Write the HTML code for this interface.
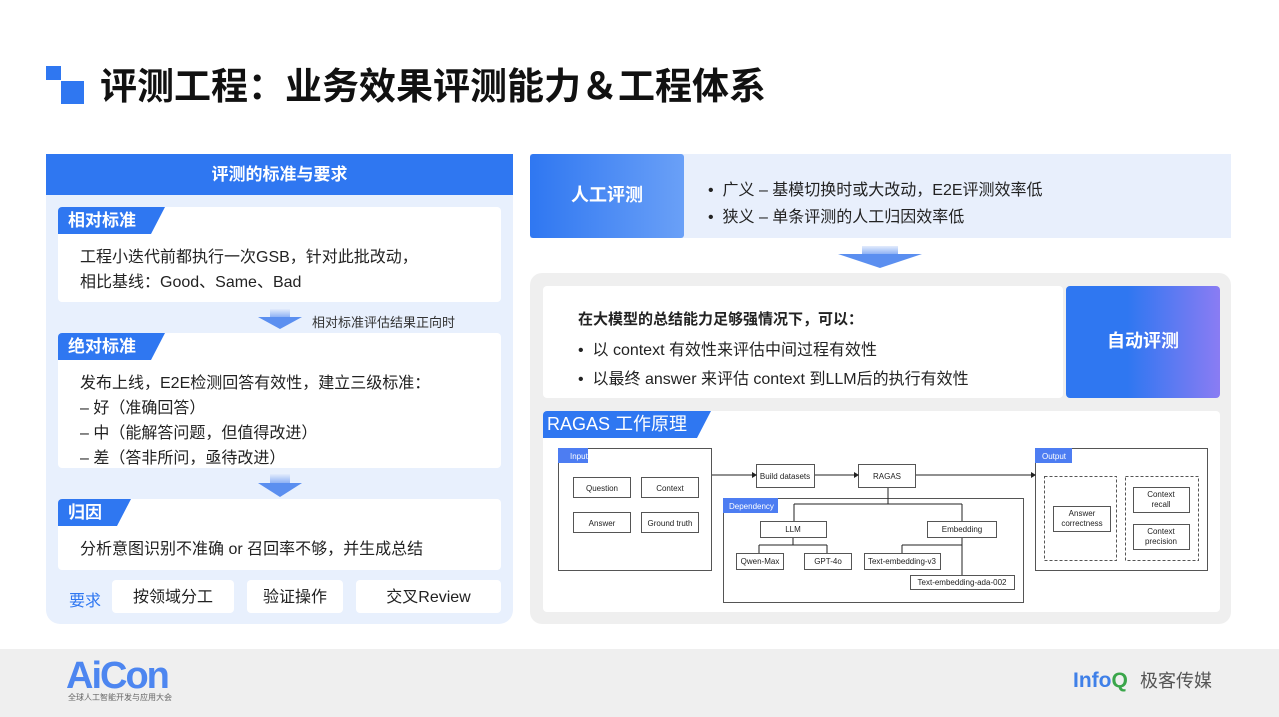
<!DOCTYPE html>
<html><head><meta charset="utf-8"><style>
*{margin:0;padding:0;box-sizing:border-box}
body{width:1279px;height:717px;position:relative;background:#fff;font-family:"Liberation Sans","Noto Sans CJK SC",sans-serif;color:#222;overflow:hidden}
.a{position:absolute}
.card{position:absolute;background:#fff;border-radius:4px}
.tag{position:absolute;left:0;top:0;height:27px;background:#2f77f1;color:#fff;font-weight:bold;font-size:17px;line-height:27px;padding-left:10px;clip-path:polygon(0 0,100% 0,calc(100% - 14px) 100%,0 100%);border-radius:4px 0 12px 0}
.t{position:absolute;font-size:16px;white-space:nowrap;color:#222}
.btn{position:absolute;top:580px;height:33px;background:#fff;border-radius:4px;font-size:16px;line-height:35px;text-align:center}
.arrow{position:absolute;width:0;height:0;border-left:22px solid transparent;border-right:22px solid transparent;border-top:12px solid #5b8ff0}
.arrowstem{position:absolute;background:linear-gradient(#e3ecfc,#8fb2f5)}
</style></head><body>
<div class="a" style="left:46px;top:66px;width:15px;height:14px;background:#2f77f1"></div>
<div class="a" style="left:61px;top:81px;width:23px;height:23px;background:#2f77f1"></div>
<div class="a" style="left:100px;top:64px;font-size:37px;font-weight:bold;color:#111;white-space:nowrap;line-height:46px">评测工程：业务效果评测能力＆工程体系</div>

<div class="a" style="left:46px;top:154px;width:467px;height:470px;background:#e8f0fd;border-radius:2px 2px 14px 14px"></div>
<div class="a" style="left:46px;top:154px;width:467px;height:41px;background:#2f77f1;color:#fff;font-weight:bold;font-size:17px;line-height:41px;text-align:center">评测的标准与要求</div>

<div class="card" style="left:58px;top:207px;width:443px;height:95px"><div class="tag" style="width:107px">相对标准</div></div>
<div class="t" style="left:80px;top:243px">工程小迭代前都执行一次GSB，针对此批改动，</div>
<div class="t" style="left:80px;top:268px">相比基线：Good、Same、Bad</div>
<div class="arrowstem" style="left:270px;top:309px;width:20px;height:8px"></div>
<div class="arrow" style="left:258px;top:317px"></div>
<div class="a" style="left:312px;top:312px;font-size:13px;color:#333">相对标准评估结果正向时</div>

<div class="card" style="left:58px;top:333px;width:443px;height:135px"><div class="tag" style="width:107px">绝对标准</div></div>
<div class="t" style="left:80px;top:369px">发布上线，E2E检测回答有效性，建立三级标准：</div>
<div class="t" style="left:80px;top:394px">– 好（准确回答）</div>
<div class="t" style="left:80px;top:419px">– 中（能解答问题，但值得改进）</div>
<div class="t" style="left:80px;top:444px">– 差（答非所问，亟待改进）</div>
<div class="arrowstem" style="left:270px;top:474px;width:20px;height:9px"></div>
<div class="arrow" style="left:258px;top:483px;border-top-width:14px"></div>

<div class="card" style="left:58px;top:499px;width:443px;height:71px"><div class="tag" style="width:73px">归因</div></div>
<div class="t" style="left:80px;top:535px">分析意图识别不准确 or 召回率不够，并生成总结</div>

<div class="a" style="left:69px;top:587px;font-size:16px;color:#2f77f1">要求</div>
<div class="btn" style="left:112px;width:122px">按领域分工</div>
<div class="btn" style="left:247px;width:96px">验证操作</div>
<div class="btn" style="left:356px;width:145px">交叉Review</div>

<div class="a" style="left:530px;top:154px;width:701px;height:84px;background:#e8effc"></div>
<div class="a" style="left:530px;top:154px;width:154px;height:84px;background:linear-gradient(90deg,#2f77f1,#6aa0f7);border-radius:3px;color:#fff;font-weight:bold;font-size:18px;line-height:82px;text-align:center">人工评测</div>
<div class="t" style="left:708px;top:176px">•&nbsp; 广义 – 基模切换时或大改动，E2E评测效率低</div>
<div class="t" style="left:708px;top:203px">•&nbsp; 狭义 – 单条评测的人工归因效率低</div>
<div class="arrowstem" style="left:862px;top:246px;width:36px;height:8px"></div>
<div class="arrow" style="left:838px;top:254px;border-left-width:42px;border-right-width:42px;border-top-width:14px"></div>

<div class="a" style="left:530px;top:273px;width:701px;height:351px;background:#efefef;border-radius:12px"></div>
<div class="card" style="left:543px;top:286px;width:520px;height:112px"></div>
<div class="a" style="left:1066px;top:286px;width:154px;height:112px;background:linear-gradient(90deg,#2f77f1 40%,#8a7cf3);border-radius:4px;color:#fff;font-weight:bold;font-size:18px;line-height:110px;text-align:center">自动评测</div>
<div class="t" style="left:578px;top:308px;font-weight:bold;font-size:15px">在大模型的总结能力足够强情况下，可以：</div>
<div class="t" style="left:578px;top:336px">•&nbsp; 以 context 有效性来评估中间过程有效性</div>
<div class="t" style="left:578px;top:365px">•&nbsp; 以最终 answer 来评估 context 到LLM后的执行有效性</div>

<div class="card" style="left:543px;top:411px;width:677px;height:201px"><div class="tag" style="width:168px;font-weight:normal;font-size:18px;padding-left:4px">RAGAS 工作原理</div></div>

<svg class="a" style="left:0;top:0" width="1279" height="717" font-family="Liberation Sans,sans-serif" font-size="8" text-anchor="middle">
<g fill="#fff" stroke="#555" stroke-width="1">
<rect x="558.5" y="448.5" width="153" height="122"/>
<rect x="723.5" y="498.5" width="300" height="104"/>
<rect x="1035.5" y="448.5" width="172" height="122"/>
<rect x="573.5" y="477.5" width="57" height="20"/><rect x="641.5" y="477.5" width="57" height="20"/>
<rect x="573.5" y="512.5" width="57" height="20"/><rect x="641.5" y="512.5" width="57" height="20"/>
<rect x="756.5" y="464.5" width="58" height="23"/><rect x="858.5" y="464.5" width="57" height="23"/>
<rect x="760.5" y="521.5" width="66" height="16"/><rect x="927.5" y="521.5" width="69" height="16"/>
<rect x="736.5" y="553.5" width="47" height="16"/><rect x="804.5" y="553.5" width="47" height="16"/>
<rect x="864.5" y="553.5" width="76" height="16"/><rect x="910.5" y="575.5" width="104" height="14"/>
<rect x="1044.5" y="476.5" width="72" height="84" stroke-dasharray="3,2"/>
<rect x="1125.5" y="476.5" width="73" height="84" stroke-dasharray="3,2"/>
<rect x="1053.5" y="506.5" width="57" height="25"/>
<rect x="1133.5" y="487.5" width="56" height="25"/><rect x="1133.5" y="524.5" width="56" height="25"/>
</g>
<g fill="#4d7df2"><rect x="558" y="448" width="30" height="15"/><rect x="723" y="498" width="55" height="15"/><rect x="1035" y="448" width="37" height="15"/></g>
<g stroke="#222" fill="none"><path d="M712 475H752M815 475H854M916 475H1031M888 488V504M794 504H962M794 504V521M962 504V521M793 538V545M759 545H827M759 545V553M827 545V553M962 538V575M902 545H962M902 545V553"/></g>
<g fill="#222"><path d="M752 472l5 3-5 3zM854 472l5 3-5 3zM1031 472l5 3-5 3z"/></g>
<g fill="#fff" text-anchor="start"><text x="570" y="459">Input</text><text x="729" y="509">Dependency</text><text x="1042" y="459">Output</text></g>
<g fill="#222">
<text x="602" y="491">Question</text><text x="670" y="491">Context</text>
<text x="602" y="526">Answer</text><text x="670" y="526">Ground truth</text>
<text x="785" y="479">Build datasets</text><text x="887" y="479">RAGAS</text>
<text x="793" y="532">LLM</text><text x="962" y="532">Embedding</text>
<text x="760" y="564">Qwen-Max</text><text x="828" y="564">GPT-4o</text>
<text x="902" y="564">Text-embedding-v3</text><text x="962" y="585">Text-embedding-ada-002</text>
<text x="1082" y="516">Answer</text><text x="1082" y="526">correctness</text>
<text x="1161" y="497">Context</text><text x="1161" y="507">recall</text>
<text x="1161" y="534">Context</text><text x="1161" y="544">precision</text>
</g>
</svg>

<div class="a" style="left:0;top:649px;width:1279px;height:68px;background:#efefef"></div>
<div class="a" style="left:66px;top:654px;font-size:38px;font-weight:bold;color:#4d86f0;letter-spacing:-2px;line-height:44px">AiCon</div>
<div class="a" style="left:68px;top:692px;font-size:8px;color:#666">全球人工智能开发与应用大会</div>
<div class="a" style="left:1073px;top:668px;font-size:21px;font-weight:bold;color:#3f80e8;line-height:26px">Info<span style="color:#3aa64a">Q</span></div>
<div class="a" style="left:1140px;top:669px;font-size:18px;color:#555;line-height:24px">极客传媒</div>
</body></html>
